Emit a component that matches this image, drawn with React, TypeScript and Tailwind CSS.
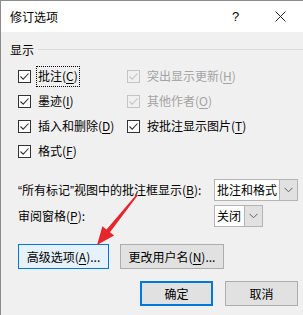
import React from 'react';

const Check = ({ disabled = false }: { disabled?: boolean }) => (
  <span
    className={`w-[13px] h-[13px] shrink-0 border flex items-center justify-center ${
      disabled ? 'border-[#c4c4c4] bg-[#f0f0f0]' : 'border-[#333333] bg-white'
    }`}
  >
    <svg width="11" height="11" viewBox="0 0 11 11">
      <path
        d="M1.5 5.5 L4.2 8.2 L9.5 2.5"
        fill="none"
        stroke={disabled ? '#c4c4c4' : '#333333'}
        strokeWidth="1.1"
      />
    </svg>
  </span>
);

const Key = ({ k }: { k: string }) => (
  <>
    (<u className="underline-offset-2">{k}</u>)
  </>
);

const Option = ({
  label,
  k,
  disabled = false,
  focused = false,
}: {
  label: string;
  k: string;
  disabled?: boolean;
  focused?: boolean;
}) => (
  <div className="flex items-center w-[109px] shrink-0">
    <Check disabled={disabled} />
    {focused ? (
      <span className="ml-[5px] px-[1px] h-[21px] flex items-center border border-dotted border-black whitespace-nowrap">
        {label}
        <Key k={k} />
      </span>
    ) : (
      <span className={`ml-[7px] whitespace-nowrap ${disabled ? 'text-[#a3a3a3]' : ''}`}>
        {label}
        <Key k={k} />
      </span>
    )}
  </div>
);

const Chevron = () => (
  <svg width="9" height="6" viewBox="0 0 9 6">
    <path d="M0.5 0.8 L4.5 4.8 L8.5 0.8" fill="none" stroke="#606060" strokeWidth="1" />
  </svg>
);

const App = () => {
  return (
    <div className="relative w-[303px] h-[315px] overflow-hidden bg-[#f0f0f0] border-l border-t border-[#8c8c8c] text-[12px] leading-[16px] text-black font-['Noto_Sans_CJK_SC','Noto_Sans',sans-serif]">
      {/* Title bar */}
      <div className="h-[31px] bg-white flex items-center pl-[9px]">
        <span className="text-[12px]">修订选项</span>
        <div className="ml-auto flex h-full">
          <div className="w-[45px] h-full flex items-center justify-center text-[13px] font-['Liberation_Sans',sans-serif]">?</div>
          <div className="w-[45px] h-full flex items-center justify-center">
            <svg width="11" height="11" viewBox="0 0 11 11">
              <path d="M0.5 0.5 L10.5 10.5 M10.5 0.5 L0.5 10.5" stroke="#222" strokeWidth="1" />
            </svg>
          </div>
        </div>
      </div>

      {/* Section header */}
      <div className="mt-[10px] pl-[9px] flex items-center">
        <span>显示</span>
        <div className="flex-1 h-px bg-[#dadada] ml-[4px] mt-[-2px]" />
      </div>

      {/* Checkbox grid */}
      <div className="mt-[6px] pl-[17px] flex flex-col gap-[1px]">
        <div className="h-[24px] flex items-center">
          <Option label="批注" k="C" focused />
          <Option label="突出显示更新" k="H" disabled />
        </div>
        <div className="h-[24px] flex items-center">
          <Option label="墨迹" k="I" />
          <Option label="其他作者" k="O" disabled />
        </div>
        <div className="h-[24px] flex items-center">
          <Option label="插入和删除" k="D" />
          <Option label="按批注显示图片" k="T" />
        </div>
        <div className="h-[24px] flex items-center">
          <Option label="格式" k="F" />
        </div>
      </div>

      {/* Selects */}
      <div className="mt-[16px] pl-[17px] flex items-center h-[22px]">
        <span className="w-[196px] whitespace-nowrap">
          <span className="font-['Liberation_Sans',sans-serif]">“</span>所有标记
          <span className="font-['Liberation_Sans',sans-serif]">”</span>视图中的批注框显示<Key k="B" />:
        </span>
        <div className="w-[84px] h-[22px] flex border border-[#b4b4b4]">
          <div className="flex-1 bg-white flex items-center pl-[2px] whitespace-nowrap">批注和格式</div>
          <div className="w-[18px] bg-[#e1e1e1] border-l border-[#b4b4b4] flex items-center justify-center">
            <Chevron />
          </div>
        </div>
      </div>
      <div className="mt-[4px] pl-[17px] flex items-center h-[22px]">
        <span className="w-[196px] whitespace-nowrap">
          审阅窗格<Key k="P" />:
        </span>
        <div className="w-[49px] h-[22px] flex border border-[#b4b4b4]">
          <div className="flex-1 bg-white flex items-center pl-[2px] whitespace-nowrap">关闭</div>
          <div className="w-[18px] bg-[#e1e1e1] border-l border-[#b4b4b4] flex items-center justify-center">
            <Chevron />
          </div>
        </div>
      </div>

      {/* Buttons */}
      <div className="mt-[17px] pl-[17px] flex gap-[11px]">
        <button className="w-[91px] h-[25px] border border-[#0078d7] bg-[#e5f1fb] flex items-center justify-center whitespace-nowrap">
          高级选项<Key k="A" />...
        </button>
        <button className="w-[104px] h-[25px] border border-[#adadad] bg-[#e1e1e1] flex items-center justify-center whitespace-nowrap">
          更改用户名<Key k="N" />...
        </button>
      </div>
      <div className="mt-[12px] pl-[139px] flex gap-[12px]">
        <button className="w-[73px] h-[25px] border-2 border-[#0078d7] bg-[#e1e1e1] flex items-center justify-center">
          确定
        </button>
        <button className="w-[73px] h-[25px] border border-[#adadad] bg-[#e1e1e1] flex items-center justify-center">
          取消
        </button>
      </div>

      {/* Red annotation arrow */}
      <svg className="absolute inset-0 pointer-events-none" width="303" height="315" viewBox="-1 -1 303 315">
        <polygon
          points="135.6,193.5 134.4,192.5 104.5,227.6 100.4,224.3 95,243 112.1,233.6 108,230.3"
          fill="#e5262b"
        />
      </svg>
    </div>
  );
};

export default App;
